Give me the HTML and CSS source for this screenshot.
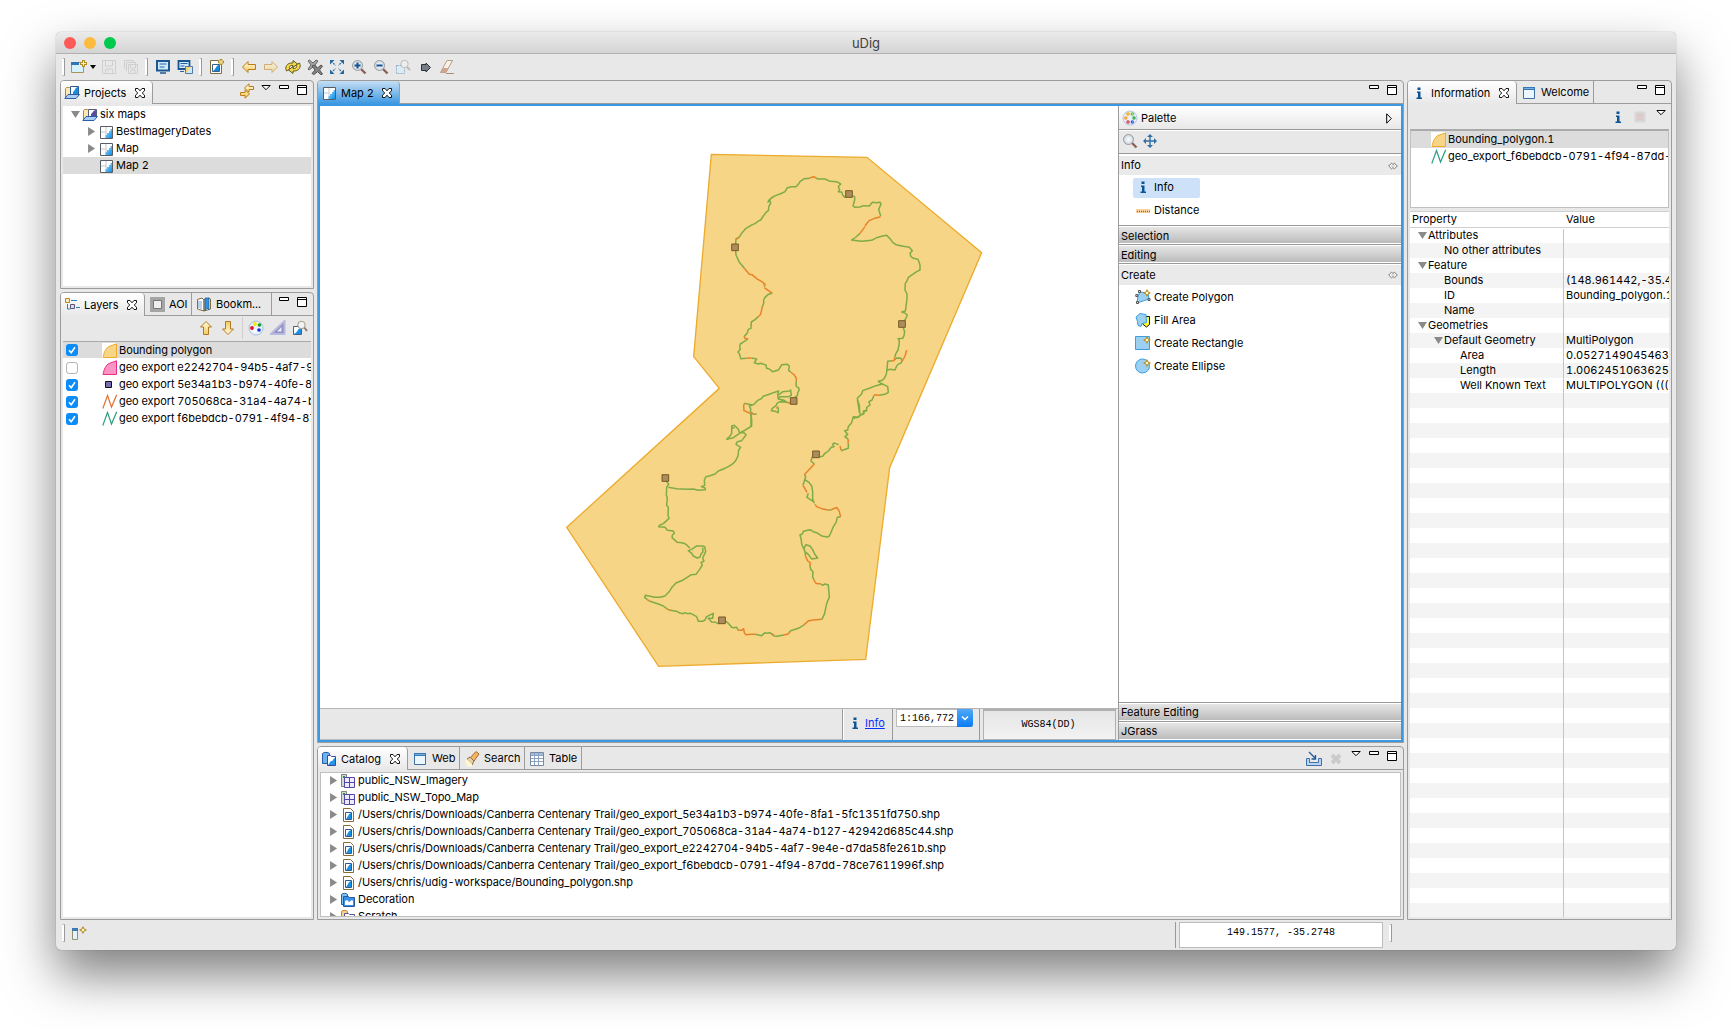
FILE: index.html
```html
<!DOCTYPE html>
<html lang="en">
<head>
<meta charset="utf-8">
<title>uDig</title>
<link rel="stylesheet" href="styles.css">
</head>
<body>
<svg class="defs" width="0" height="0">
  <defs>
    <linearGradient id="sky" x1="0" y1="0" x2="1" y2="1"><stop offset="0" stop-color="#9fdcff"/><stop offset="1" stop-color="#0a8de6"/></linearGradient>
    <linearGradient id="gold" x1="0" y1="0" x2="0" y2="1"><stop offset="0" stop-color="#fffbe0"/><stop offset="1" stop-color="#f5c95e"/></linearGradient>
    <radialGradient id="lens"><stop offset="0" stop-color="#fff"/><stop offset="1" stop-color="#c8d4e2"/></radialGradient>
  </defs>
  <symbol id="i-close" viewBox="0 0 10 10"><path d="M.5 .5H3L5 2.800 7 .5H9.500V2.800L7.200 5 9.500 7.200V9.500H7L5 7.200 3 9.500H.5V7.200L2.800 5 .5 2.800Z" fill="#fff" stroke="#111"/></symbol>
  <symbol id="i-win" viewBox="0 0 28 10"><path d="M.5 .5h9v3h-9zM18.500 .5h9v9h-9zM18 2.500h10" fill="#fff" stroke="#000"/></symbol>
  <symbol id="i-menu" viewBox="0 0 10 6"><path d="M.8 .5H9.200L5 4.700Z" fill="#fff" stroke="#000"/></symbol>
  <symbol id="i-map" viewBox="0 0 16 16"><path d="M2.500 2.500h12v12h-12z" fill="#fff" stroke="#585d66"/><path d="M3 8h5V3M8 8v6" fill="none" stroke="#c3c7ce"/><path d="M14 5h-1.500v2H11v2H9v2H7.500v3H14z" fill="url(#sky)"/></symbol>
  <symbol id="i-project" viewBox="0 0 16 16"><path d="M1.500 13V3.500l1-1h3l1 1V9z" fill="#fde9b0" stroke="#b8873a"/><path d="M6.500 2.500h8v8h-8z" fill="#fff" stroke="#555b7a"/><path d="M14 3c-3 0-3 3-5 4v3h5z" fill="#5a4b9c"/><path d="M.8 13.500L4 9.500h11.500L12 13.500Z" fill="#a9cdf5" stroke="#2a5da8"/></symbol>
  <symbol id="i-project2" viewBox="0 0 16 16"><path d="M1.500 13V3.500l1-1h3l1 1V9z" fill="#fde9b0" stroke="#b8873a"/><path d="M6.500 1.500h8v9h-8z" fill="#fff" stroke="#2c5c94"/><path d="M14 2c-3 0-3 4-5 5v3h5z" fill="#1790df"/><path d="M.8 13.500L4 9.500h11.500L12 13.500Z" fill="#a9cdf5" stroke="#2a5da8"/></symbol>
  <symbol id="i-layers" viewBox="0 0 16 16"><path d="M3.500 7v5h3M7 3.500h6M12 10.500h4" fill="none" stroke="#2a83b5"/><path d="M1.500 1.500h4v4h-4z" fill="#fdeab4" stroke="#b78528"/><path d="M6.500 7.500h4v4h-4z" fill="#ddd8f2" stroke="#5c5579"/></symbol>
  <symbol id="i-aoi" viewBox="0 0 16 16"><path d="M1 0h15v15H1z" fill="#a5a5a5"/><path d="M4.500 3.500h8v8h-8z" fill="#eee" stroke="#777"/></symbol>
  <symbol id="i-book" viewBox="0 0 16 16"><path d="M1.500 2.500L6 1l2 2v11l-6.500-2zM8 3l5-2 1.500 1v10L8 14z" fill="#fff" stroke="#846b3d"/><path d="M3 4v7M5 4v8" stroke="#75a0c9"/><path d="M9 1h4v12l-2-2-2 3z" fill="#2f8fe0" stroke="#1d5d9b" stroke-width=".7"/></symbol>
  <symbol id="i-info" viewBox="0 0 16 16"><path d="M6 6.500h3.500v6H11V14H5.500v-1.500H7V8H6zM6.500 2.500h3V5h-3z" fill="#0b5595"/></symbol>
  <symbol id="i-page" viewBox="0 0 16 16"><path d="M2.500 2.500h11v11h-11z" fill="#eaf7ff" stroke="#3f6f9e"/><path d="M2 2h12v3H2z" fill="#3877b5"/><path d="M3 3.500h10" stroke="#74b1df"/></symbol>
  <symbol id="i-new" viewBox="0 0 16 16"><path d="M.5 3.500h12v10H.5z" fill="#d6f1fb" stroke="#a69459"/><path d="M0 3h8v3H0z" fill="#2f74b4"/><path d="M12.500 1v7M9 4.500h7" stroke="#b38b24" stroke-width="3"/><path d="M12.500 2v5M10 4.500h5" stroke="#fff6bd"/></symbol>
  <symbol id="i-save" viewBox="0 0 16 16"><path d="M1.500 1.500h13v13h-13zM4.500 2v5h7V2M4.500 14v-4h7v4M6.500 12h1.500" fill="none" stroke="#cfcfcf"/></symbol>
  <symbol id="i-saveall" viewBox="0 0 16 16"><path d="M1.500 10V1.500h9V4M3.500 12V3.500h9V6M5.500 5.500h9v9h-9zM7.500 6v3h5V6M8 14v-3h4v3" fill="none" stroke="#cfcfcf"/></symbol>
  <symbol id="i-screen" viewBox="0 0 16 16"><path d="M2 2h12v9.500H2z" fill="#cfeafd" stroke="#1c5691" stroke-width="2"/><path d="M4.500 5h7M4.500 8h5" stroke="#2a649d"/><path d="M5 14h6" stroke="#26578b" stroke-width="1.500"/></symbol>
  <symbol id="i-screen2" viewBox="0 0 16 16"><path d="M1.500 2h11v8h-11z" fill="#cfeafd" stroke="#1c5691" stroke-width="1.800"/><path d="M3.500 4.500h7M3.500 7h4M3 12.500h4" stroke="#2a649d"/><path d="M8.500 7.500h7v7h-7z" fill="#fbd36b" stroke="#557aa5"/><path d="M15 8c-4 1-3 4-6 6h6z" fill="#c7eafc"/></symbol>
  <symbol id="i-newmap" viewBox="0 0 16 16"><path d="M1.500 1.500h8l3 3v10h-11z" fill="#fff" stroke="#7d6a3e"/><path d="M3.500 5.500h7v7h-7z" fill="#fff" stroke="#385e85"/><path d="M10 6c-3 .5-3 4-6 6h6z" fill="#1689df"/><path d="M12 0v6M9 3h6" stroke="#b38b24" stroke-width="2.600"/><path d="M12 1v4M10 3h4" stroke="#fff4b4"/></symbol>
  <symbol id="i-back" viewBox="0 0 16 16"><path d="M1.500 8L7 2.500V5.500h7.500v5H7v3z" fill="url(#gold)" stroke="#bb7d1b"/></symbol>
  <symbol id="i-refresh" viewBox="0 0 16 16"><path d="M1.500 12C-.5 8 2 3.500 8 4V1.500L12.500 5 8 8.500V6.500C5 6 3.500 8 5 10z" fill="#f5d74c" stroke="#645c20"/><path d="M14.500 4c2 4-.5 8.500-6.500 8v2.500L3.500 11 8 7.500v2c3 .5 4.500-1.500 3-3.500z" fill="#f5d74c" stroke="#645c20"/></symbol>
  <symbol id="i-stop" viewBox="0 0 16 16"><path d="M1 2l1.500-1L6 4l3-3 2 1-3 4 3 4-2 1-3-3-4 3-1-1 3-4z" fill="#a5a5a5" stroke="#666"/><path d="M5 7l2-1 3.500 3L14 6l1.500 1-3 4 3 4-1.500.7-3.500-3L7 15.500l-2-1 3-3.500z" fill="#858585" stroke="#555"/></symbol>
  <symbol id="i-extent" viewBox="0 0 16 16"><path d="M2 2l4.500 4.500M14 2L9.500 6.500M2 14l4.500-4.500M14 14L9.500 9.500" stroke="#3273a5" stroke-width="1.300" stroke-dasharray="2 1"/><path d="M1 1h4.500L1 5.500zM15 1v4.500L10.500 1zM1 15v-4.500L5.500 15zM15 15h-4.500l4.500-4.500z" fill="#24689d"/></symbol>
  <symbol id="i-lens" viewBox="0 0 16 16"><path d="M10 10l4.500 4.500" stroke="#896259" stroke-width="2.400"/><circle cx="6.500" cy="6.500" r="5" fill="url(#lens)" stroke="#9b9b9b"/></symbol>
  <symbol id="i-zoomin" viewBox="0 0 16 16"><use href="#i-lens"/><path d="M3.500 6.500h6M6.500 3.500v6" stroke="#11548f" stroke-width="2"/></symbol>
  <symbol id="i-zoomout" viewBox="0 0 16 16"><use href="#i-lens"/><path d="M3.500 6.500h6" stroke="#11548f" stroke-width="2"/></symbol>
  <symbol id="i-zoomsel" viewBox="0 0 16 16"><path d="M1.500 6.500h8v8h-8z" fill="#dcecf5" stroke="#8fb0c4" stroke-dasharray="2 1"/><path d="M12 8l3 3" stroke="#c7b5ae" stroke-width="2"/><circle cx="9.500" cy="5" r="3.700" fill="#eee" stroke="#bbb"/></symbol>
  <symbol id="i-tag" viewBox="0 0 16 16"><path d="M4.500 5.500H9V4l4.500 4.500L9 13v-1.500H4.500z" fill="#777d86" stroke="#30343a"/></symbol>
  <symbol id="i-erase" viewBox="0 0 16 16"><path d="M8 1.500h5.500L7 13.500H1.500z" fill="#faf3ea" stroke="#b69b88"/><path d="M4 9h5.500L7 13.500H1.500z" fill="#cfa58c"/><path d="M7 14.500h8" stroke="#a98c73"/></symbol>
  <symbol id="i-link" viewBox="0 0 16 16"><path d="M5.500 5L10 .8v2.700h4.500v3H10v2.700zM10.500 11L6 6.800v2.700H1.500v3H6v2.700z" fill="url(#gold)" stroke="#bb7d1b"/></symbol>
  <symbol id="i-up" viewBox="0 0 16 16"><path d="M8 1.500L13.500 7H10.500v7.500h-5V7h-3z" fill="url(#gold)" stroke="#b07a20"/></symbol>
  <symbol id="i-palette" viewBox="0 0 16 16"><circle cx="8" cy="8" r="7" fill="#e7f1fd" stroke="#a9bdd6"/><circle cx="7" cy="4" r="1.900" fill="#f3ea00"/><circle cx="11.500" cy="5" r="1.800" fill="#169b1c"/><circle cx="4" cy="8" r="1.900" fill="#ea1020"/><circle cx="11" cy="10" r="1.800" fill="#1430d8"/><circle cx="7" cy="11" r="1.800" fill="#fff"/></symbol>
  <symbol id="i-palette2" viewBox="0 0 16 16"><circle cx="8" cy="8" r="7" fill="#e6effa" stroke="#b4c6dc"/><g fill="#fff" stroke-width="1.200"><circle cx="6" cy="4" r="1.100" stroke="#f0a500"/><circle cx="10.300" cy="4" r="1.100" stroke="#6fbe32"/><circle cx="3.800" cy="8" r="1.100" stroke="#f49d22"/><circle cx="12" cy="8" r="1.100" stroke="#25a63c"/><circle cx="6" cy="12" r="1.100" stroke="#db3340"/><circle cx="10.300" cy="12" r="1.100" stroke="#2a56db"/></g></symbol>
  <symbol id="i-scale" viewBox="0 0 16 16"><path d="M14.500 1v13H1z" fill="#8f8fc4" stroke="#b9b9dd" stroke-width="2"/><path d="M11.500 7v4.500H7z" fill="#eef"/></symbol>
  <symbol id="i-zoomlayer" viewBox="0 0 16 16"><path d="M1.500 6.500h8v8h-8z" fill="#fff" stroke="#4c5f7c"/><path d="M9 8c-3 0-3 4-7 6h7z" fill="#1a90e4"/><path d="M12 7l3 4" stroke="#8c7d74" stroke-width="2"/><circle cx="9.500" cy="5" r="3.700" fill="#eef3f8" stroke="#a8987f"/></symbol>
  <symbol id="i-poly" viewBox="0 0 15 15"><path d="M0 0h15v15H0z" fill="#fff"/><path d="M1 14.500C2 9 4 5 7 3.500L14.500 .8v13.700z" fill="#f6d586" stroke="#efa92b"/></symbol>
  <symbol id="i-polypink" viewBox="0 0 15 15"><path d="M1 14.500C2 9 4 5 7 3.500L14.500 .8v13.700z" fill="#fa94c2" stroke="#ea2c8c"/></symbol>
  <symbol id="i-point" viewBox="0 0 15 15"><path d="M3.500 4.500h6v6h-6z" fill="#7570b3" stroke="#111"/></symbol>
  <symbol id="i-line" viewBox="0 0 15 15"><path d="M.8 14.500L5.500 1.500 9.500 13 14.700 .8" fill="none" stroke="currentColor" stroke-width="1.200"/></symbol>
  <symbol id="i-catalog" viewBox="0 0 16 16"><path d="M1.500 2.500c1-1.500 6-1.500 7 0v10h-7z" fill="#6fb2ef" stroke="#235fa5"/><path d="M6.500 4.500h3l1 1h4v9h-8z" fill="#fff" stroke="#41439c"/><path d="M14 7c-2 0-2 4-4 3l-3 4h7z" fill="#2196ea"/></symbol>
  <symbol id="i-torch" viewBox="0 0 16 16"><path d="M6 7l6-6.500 3 2.500-5 7z" fill="#f5b45e" stroke="#a8692b"/><path d="M3 8l3-2 4 4-2 4z" fill="#e3cfa8" stroke="#8c6b45"/><path d="M1 10l2-2 5 5v2.500H3z" fill="#fff7cf"/></symbol>
  <symbol id="i-table" viewBox="0 0 16 16"><path d="M1.500 1.500h13v13h-13z" fill="#fff" stroke="#7888a0"/><path d="M2 2h12v2.500H2z" fill="#a5bedf"/><path d="M2 4.500h12M2 7.500h12M2 10.500h12M5.500 2v12M9.500 2v12" stroke="#8ca3c5"/></symbol>
  <symbol id="i-import" viewBox="0 0 16 16"><path d="M.5 7.500v7h15v-7h-3v4h-9v-4z" fill="#b9d4ee" stroke="#3f70ac"/><path d="M3 1l6 6M9.500 4v4H5.500" fill="none" stroke="#1e5b96" stroke-width="1.300"/></symbol>
  <symbol id="i-delete" viewBox="0 0 16 16"><path d="M4 4l8 8M12 4l-8 8" stroke="#cbcbcb" stroke-width="4"/></symbol>
  <symbol id="i-wms" viewBox="0 0 16 16"><path d="M1.500 1.500h5v12h-5z" fill="#d3dbd9" stroke="#7a8583"/><path d="M3 3h2v2H3z" fill="#1a9c38"/><path d="M4.500 4.500h10v10h-10zM4.500 9.500h10M9.500 4.500v10" fill="#eeeaff" stroke="#5347a5"/></symbol>
  <symbol id="i-shp" viewBox="0 0 16 16"><path d="M3.500 1.500h7l3 3v10h-10z" fill="#fff" stroke="#8c6b33"/><path d="M5.500 5.500h6v7h-6z" fill="#fff" stroke="#335a89"/><path d="M11 6c-3 1-3 4-5 6h5z" fill="#1a90e4"/></symbol>
  <symbol id="i-deco" viewBox="0 0 16 16"><path d="M1.500 2.500c1-1.500 5-1.500 6 0v10h-6z" fill="#7ec0f2" stroke="#235fa5"/><path d="M3.500 4.500h5l1 1h5v9h-11z" fill="#3a90e4" stroke="#2757a0"/><path d="M5 13V9l2-1 2 2 3-2 1 1v4z" fill="#fff"/></symbol>
  <symbol id="i-scratch" viewBox="0 0 16 16"><path d="M1.500 2.500c1-1.500 5-1.500 6 0v10h-6z" fill="#fbd48c" stroke="#c77f28"/><path d="M4.500 4.500h4l1 1h5v9h-10z" fill="#fff" stroke="#5652a4"/></symbol>
  <symbol id="i-pan" viewBox="0 0 16 16"><path d="M8 3v10M3 8h10" stroke="#326fa4" stroke-width="1.400"/><path d="M8 1l3 3H5zM8 15l3-3H5zM1 8l3-3v6zM15 8l-3-3v6z" fill="#326fa4"/></symbol>
  <symbol id="i-ruler" viewBox="0 0 16 16"><path d="M1 7h14v4H1z" fill="#f9d3a0"/><path d="M2 9.500h13" stroke="#a36a2d" stroke-width="1.500" stroke-dasharray="1 1"/></symbol>
  <symbol id="i-star" viewBox="0 0 8 8"><path d="M4 .7L5 3l2.300 1L5 5 4 7.300 3 5 .7 4 3 3z" fill="#fff6bd" stroke="#b38b24"/></symbol>
  <symbol id="i-cpoly" viewBox="0 0 16 16"><path d="M5 3l8 1 1 6-12 4 1-7z" fill="#9ccff0" stroke="#3d9fdf"/><path d="M3.500 1.500h2v2h-2zM.8 5.500h2v2h-2zM1.500 12.500h2v2h-2zM13 9.500h2v2h-2z" fill="#ddd" stroke="#555"/><use href="#i-star" x="8" y="0" width="8" height="8"/></symbol>
  <symbol id="i-fill" viewBox="0 0 16 16"><path d="M10 4.500h4.500v8l-3 2.500-4-3z" fill="#ffff25" stroke="#111"/><path d="M1 5l4-3.500 6 1 .5 8-4.500 1-1 3-3-1-.5-4z" fill="#9ccff0" stroke="#3d9fdf"/></symbol>
  <symbol id="i-rect" viewBox="0 0 16 16"><path d="M.5 1.500h14v13H.5z" fill="#9ccff0" stroke="#3d9fdf"/><use href="#i-star" x="8" y="1" width="8" height="8"/></symbol>
  <symbol id="i-ell" viewBox="0 0 16 16"><circle cx="7.500" cy="8" r="7" fill="#9ccff0" stroke="#3d9fdf"/><use href="#i-star" x="8" y="1" width="8" height="8"/></symbol>
  <symbol id="i-pin" viewBox="0 0 10 8"><path d="M.7 4L3.500 1.200 5 2.500 6.500 1.200 9.300 4 6.500 6.800 5 5.500 3.500 6.800zM3.500 4h1M5.500 4h1" fill="#fff" stroke="#666" stroke-width=".9"/></symbol>
  <symbol id="i-fast" viewBox="0 0 16 16"><path d="M1.500 3.500h5v11h-5z" fill="#e0f5ff" stroke="#96906c"/><path d="M1 3h6v3H1z" fill="#3a7bb6"/><use href="#i-star" x="8" y="1" width="8" height="8"/></symbol>
  <symbol id="i-stopbox" viewBox="0 0 16 16"><path d="M3.500 3.500h9v9h-9z" fill="#ddcaca" stroke="#d8d8d8" stroke-width="2"/></symbol>
</svg>

<main class="window">
  <header class="titlebar"><i class="light red"></i><i class="light amber"></i><i class="light green"></i><h1>uDig</h1></header>

  <nav class="toolbar">
    <i class="grip"></i>
    <span class="tool"><svg><use href="#i-new"/></svg></span><i class="drop"></i>
    <span class="tool"><svg><use href="#i-save"/></svg></span><span class="tool"><svg><use href="#i-saveall"/></svg></span>
    <i class="grip"></i>
    <span class="tool"><svg><use href="#i-screen"/></svg></span><span class="tool"><svg><use href="#i-screen2"/></svg></span>
    <i class="grip"></i>
    <span class="tool"><svg><use href="#i-newmap"/></svg></span>
    <i class="grip"></i>
    <span class="tool"><svg><use href="#i-back"/></svg></span>
    <span class="tool faded"><svg class="flip"><use href="#i-back"/></svg></span>
    <span class="tool"><svg><use href="#i-refresh"/></svg></span>
    <span class="tool"><svg><use href="#i-stop"/></svg></span>
    <span class="tool"><svg><use href="#i-extent"/></svg></span>
    <span class="tool"><svg><use href="#i-zoomin"/></svg></span>
    <span class="tool"><svg><use href="#i-zoomout"/></svg></span>
    <span class="tool"><svg><use href="#i-zoomsel"/></svg></span>
    <span class="tool"><svg><use href="#i-tag"/></svg></span>
    <span class="tool"><svg><use href="#i-erase"/></svg></span>
  </nav>

  <div class="workbench">
    <div class="col left">
      <section class="panel projects">
        <div class="tabs">
          <div class="tab on t-projects"><svg><use href="#i-project2"/></svg>Projects<svg class="x"><use href="#i-close"/></svg></div>
          <div class="actions"><svg class="link"><use href="#i-link"/></svg><svg class="menu"><use href="#i-menu"/></svg><svg class="win"><use href="#i-win"/></svg></div>
        </div>
        <ul class="tree">
          <li class="row"><i class="open"></i><svg><use href="#i-project"/></svg>six maps</li>
          <li class="row sub"><i class="shut"></i><svg><use href="#i-map"/></svg>BestImageryDates</li>
          <li class="row sub"><i class="shut"></i><svg><use href="#i-map"/></svg>Map</li>
          <li class="row sub sel"><i class="leaf"></i><svg><use href="#i-map"/></svg>Map 2</li>
        </ul>
      </section>
      <section class="panel layers">
        <div class="tabs">
          <div class="tab on t-layers"><svg><use href="#i-layers"/></svg>Layers<svg class="x"><use href="#i-close"/></svg></div>
          <div class="tab t-aoi"><svg><use href="#i-aoi"/></svg>AOI</div>
          <div class="tab t-book"><svg><use href="#i-book"/></svg>Bookm...</div>
          <div class="actions"><svg class="win"><use href="#i-win"/></svg></div>
        </div>
        <div class="layerbar"><svg><use href="#i-up"/></svg><svg class="down"><use href="#i-up"/></svg><i></i><svg><use href="#i-palette"/></svg><svg><use href="#i-scale"/></svg><svg><use href="#i-zoomlayer"/></svg></div>
        <ul class="layerlist">
          <li class="sel"><span class="check"><svg viewBox="0 0 12 12"><path d="M3 6.300l2.200 2.400L9 3.300"/></svg></span><svg class="sym"><use href="#i-poly"/></svg>Bounding polygon</li>
          <li><span class="check off"></span><svg class="sym"><use href="#i-polypink"/></svg>geo export e2242704-94b5-4af7-9e4e</li>
          <li><span class="check"><svg viewBox="0 0 12 12"><path d="M3 6.300l2.200 2.400L9 3.300"/></svg></span><svg class="sym"><use href="#i-point"/></svg>geo export 5e34a1b3-b974-40fe-8fa1</li>
          <li><span class="check"><svg viewBox="0 0 12 12"><path d="M3 6.300l2.200 2.400L9 3.300"/></svg></span><svg class="sym orange"><use href="#i-line"/></svg>geo export 705068ca-31a4-4a74-b127</li>
          <li><span class="check"><svg viewBox="0 0 12 12"><path d="M3 6.300l2.200 2.400L9 3.300"/></svg></span><svg class="sym teal"><use href="#i-line"/></svg>geo export f6bebdcb-0791-4f94-87dd</li>
        </ul>
      </section>
    </div>

    <div class="col center">
      <section class="panel editor">
        <div class="tabs">
          <div class="tab on t-map"><svg><use href="#i-map"/></svg>Map 2<svg class="x"><use href="#i-close"/></svg></div>
          <div class="actions"><svg class="win"><use href="#i-win"/></svg></div>
        </div>
        <div class="editbody">
          <div class="mapside">
            <svg class="canvas" viewBox="0 0 798 602">
              <g transform="translate(230 34) scale(.33333)">
                <path class="bounds" d="M484 43L951 52 1295 338 1019 983 947 1558 326 1579 50 1162 508 745 431 650Z"/>
                <g class="trail">
                  <path d="M780 115L763 116 750 125 745 133 738 140 725 140 712 143 705 155 690 162 676 167 664 174 657 180 653 188M664 174L659 180 662 190 657 198 655 212 648 217 640 228 632 240 625 243 615 251 607 254 588 265 575 280 567 292 558 297 556 322 558 345 567 365 583 385M645 430L643 440M667 460L655 463 645 472 641 480 641 490 637 500M625 530L615 539 604 546 603 565 595 568 592 578 582 590M594 597L582 605 571 612 569 620 571 628 564 636 569 643 572 656 590 655M604 654L620 657 613 668 625 672 632 670 648 675 650 685 658 687 668 695 685 690 692 680 695 674 712 673 718 678 716 692 722 696M739 722L738 738 747 745 747 752 743 758 743 766 737 770 731 784M714 789L702 781 685 777 683 764 686 753 670 758 660 762 640 769 634 776 622 782 612 793 607 795 583 790M686 765L698 755 718 753 722 750 724 766 716 770 690 770 684 776 698 782 712 787 690 785 681 790 678 797 666 806 664 812 676 814 685 818 685 808 683 800M607 795L598 798 602 806 601 814 610 823 620 822M603 822L603 860"/>
                  <path d="M797 114L805 117 825 117 840 124 860 125 872 132 865 140 869 150 865 155 875 156 878 165 884 172 897 163 914 170 914 180 909 198 915 202 930 201 940 197 958 198 967 187 980 188 990 187 993 192 986 208 992 228M930 280L918 291 905 300 935 304 965 301 980 293 995 289 1010 286 1020 296 1028 307 1038 314 1060 319 1078 322 1087 332 1080 340 1083 350 1090 355 1104 358 1110 375 1110 390 1100 395 1087 404 1075 412 1071 423 1066 430 1065 450 1071 462 1071 475 1068 500 1066 513 1055 516 1065 519 1072 525 1065 540 1056 552 1064 575 1062 587 1058 595 1044 596 1047 600 1048 610 1044 630 1038 640 1034 652M1026 662L1013 664 1011 690 1022 688 1035 690 1039 680 1044 673 1053 669 1056 663 1053 655 1040 654 1034 659M1011 690L1009 702 1003 715 997 721 985 724 991 729 1000 733 1013 740 1015 757 1005 763 987 766M972 766L966 780 957 785 960 795 950 802 950 812 940 813 941 822 932 825 925 832 910 835M997 732L978 737 960 744 938 752 935 762 922 775 925 795 929 820"/>
                </g>
                <path class="road" d="M780 113L792 110 797 114M558 297L565 294M583 385L598 403 606 404 620 416 640 428 645 438M643 443L667 460M637 500L632 523 625 530M582 590L585 595 594 597M590 655L604 654M722 696L733 705 739 715 739 722M583 790L581 798 582 812 605 822 608 818M683 800L680 806M714 789L728 788M992 230L974 235 957 242 945 258M945 260L930 280M1034 652L1032 662 1026 662M1070 631L1065 648 1057 663M987 766L972 764"/>
                <g class="stage"><path d="M545 312h20v20h-20zM887 152h20v20h-20zM1046 542h20v20h-20zM721 773h20v20h-20z"/></g>
              </g>
              <g transform="translate(230 294) scale(.33333)">
                <g class="trail">
                  <path d="M950 30L944 33 940 42 932 43 925 52 910 50 905 68 895 80 893 90 884 92 893 103 885 110 895 118M922 0L928 15 929 40M895 130L895 145 873 152M866 134L852 129 848 133 852 140 844 142 835 153 825 160 818 169 810 170 798 163M791 168L786 172 783 183 793 192M763 224L767 230 764 240 759 256M766 240L777 247 785 258 788 275 788 297 793 310M791 305L780 298 771 292 775 280M835 330L842 330M872 350L862 352 858 368 850 380 845 392 838 408 832 411 815 408 800 398 790 395 780 389 760 394 757 402 750 405 754 420 755 432 765 455 767 470M764 452L762 445 768 434 780 438 788 449 794 462 803 474 785 477 775 463 765 455M780 497L782 507 789 516 788 530 792 540M812 551L817 556 825 552 835 555 838 592 832 605 828 620 824 640 816 658M760 676L745 685 722 692 718 697M702 705L680 709 672 708 660 698 650 700 645 698 635 707 616 703M565 691L560 682 550 683 545 682 537 672 530 665 515 661 505 671 497 667 485 666 475 655 488 655 490 640 470 650 465 660 458 664 445 664 440 650 422 640 412 641 405 638 400 641 390 639 380 634 370 632 357 630M350 626L340 618 325 612 300 604M292 599L284 592 286 586 315 592 330 592 345 588 356 577 366 562 378 549 400 540 424 524 438 523 449 508 457 495 453 488 462 483 458 474 467 455 464 440 458 438 440 438 425 448 415 452 425 460 430 468 442 474 450 471 453 462 459 455 458 443M420 445L408 433 400 429 382 427 366 413 367 406 373 400 370 393 352 391 345 382 326 380 330 375 340 371 357 355 354 346 355 322 350 316 352 294 349 285 350 262 356 252 350 245 346 235M355 262L380 266 410 268 430 267 445 271 466 269 465 264 454 260 464 256 463 240 468 230 480 227 495 222 505 213 520 207 535 200 550 190 557 182 564 168 566 150 572 142 558 133 562 125 575 122 588 105 583 99 568 97 565 88 553 76 545 78 547 85 554 82M578 95L605 78 605 60 603 40M545 82L545 100 540 108 530 118 550 113 572 98 580 93"/>
                </g>
                <path class="road" d="M895 118L894 130M873 150L870 138M793 192L763 224M759 256L771 277M795 313L800 320 815 326 835 330M842 330L860 322 867 332 872 350M767 470L774 484 780 487 780 499M792 540L797 549 803 551 812 551M816 658L790 660 776 662 760 676M720 695L714 702 702 705M672 706L666 701M616 703L605 703 588 704 583 698 581 686 575 691 565 691M357 630L350 626M300 604L292 599"/>
                <g class="stage"><path d="M788 153h20v20h-20zM336 224h20v20h-20zM506 651h20v20h-20z"/></g>
              </g>
            </svg>
            <footer class="mapstatus">
              <div class="fill"></div>
              <div class="mode"><svg><use href="#i-info"/></svg><a>Info</a></div>
              <div class="scale"><span class="combo"><b>1:166,772</b><i><svg viewBox="0 0 16 18"><path d="M5 7.500l3 3 3-3"/></svg></i></span></div>
              <div class="crs">WGS84(DD)</div>
            </footer>
          </div>
          <aside class="palette">
            <div class="pal-title"><svg><use href="#i-palette2"/></svg>Palette<svg class="tri" viewBox="0 0 6 11"><path d="M.7 .8L5.300 5.500.7 10.200Z"/></svg></div>
            <div class="pal-tools"><svg><use href="#i-lens"/></svg><svg><use href="#i-pan"/></svg></div>
            <div class="group g-info">Info<svg><use href="#i-pin"/></svg></div>
            <div class="entries e-info">
              <div class="entry picked"><svg><use href="#i-info"/></svg>Info</div>
              <div class="entry"><svg><use href="#i-ruler"/></svg>Distance</div>
            </div>
            <div class="drawer">Selection</div>
            <div class="drawer">Editing</div>
            <div class="group g-create">Create<svg><use href="#i-pin"/></svg></div>
            <div class="entries e-create">
              <div class="entry"><svg><use href="#i-cpoly"/></svg>Create Polygon</div>
              <div class="entry"><svg><use href="#i-fill"/></svg>Fill Area</div>
              <div class="entry"><svg><use href="#i-rect"/></svg>Create Rectangle</div>
              <div class="entry"><svg><use href="#i-ell"/></svg>Create Ellipse</div>
            </div>
            <div class="drawer">Feature Editing</div>
            <div class="drawer">JGrass</div>
          </aside>
        </div>
      </section>
      <section class="panel catalog">
        <div class="tabs">
          <div class="tab on t-cat"><svg><use href="#i-catalog"/></svg>Catalog<svg class="x"><use href="#i-close"/></svg></div>
          <div class="tab t-web"><svg><use href="#i-page"/></svg>Web</div>
          <div class="tab t-search"><svg><use href="#i-torch"/></svg>Search</div>
          <div class="tab t-table"><svg><use href="#i-table"/></svg>Table</div>
          <div class="actions"><svg class="ico"><use href="#i-import"/></svg><svg class="ico del"><use href="#i-delete"/></svg><svg class="menu"><use href="#i-menu"/></svg><svg class="win"><use href="#i-win"/></svg></div>
        </div>
        <ul class="tree boxed">
          <li class="row"><i class="shut"></i><svg><use href="#i-wms"/></svg>public_NSW_Imagery</li>
          <li class="row"><i class="shut"></i><svg><use href="#i-wms"/></svg>public_NSW_Topo_Map</li>
          <li class="row"><i class="shut"></i><svg><use href="#i-shp"/></svg>/Users/chris/Downloads/Canberra Centenary Trail/geo_export_5e34a1b3-b974-40fe-8fa1-5fc1351fd750.shp</li>
          <li class="row"><i class="shut"></i><svg><use href="#i-shp"/></svg>/Users/chris/Downloads/Canberra Centenary Trail/geo_export_705068ca-31a4-4a74-b127-42942d685c44.shp</li>
          <li class="row"><i class="shut"></i><svg><use href="#i-shp"/></svg>/Users/chris/Downloads/Canberra Centenary Trail/geo_export_e2242704-94b5-4af7-9e4e-d7da58fe261b.shp</li>
          <li class="row"><i class="shut"></i><svg><use href="#i-shp"/></svg>/Users/chris/Downloads/Canberra Centenary Trail/geo_export_f6bebdcb-0791-4f94-87dd-78ce7611996f.shp</li>
          <li class="row"><i class="shut"></i><svg><use href="#i-shp"/></svg>/Users/chris/udig-workspace/Bounding_polygon.shp</li>
          <li class="row"><i class="shut"></i><svg><use href="#i-deco"/></svg>Decoration</li>
          <li class="row"><i class="shut"></i><svg><use href="#i-scratch"/></svg>Scratch</li>
        </ul>
      </section>
    </div>

    <section class="panel info">
      <div class="tabs">
        <div class="tab on t-info"><svg><use href="#i-info"/></svg>Information<svg class="x"><use href="#i-close"/></svg></div>
        <div class="tab t-wel"><svg><use href="#i-page"/></svg>Welcome</div>
        <div class="actions"><svg class="win"><use href="#i-win"/></svg></div>
      </div>
      <div class="infobar"><svg><use href="#i-info"/></svg><svg><use href="#i-stopbox"/></svg><svg class="menu"><use href="#i-menu"/></svg></div>
      <ul class="hits">
        <li class="sel"><svg class="sym"><use href="#i-poly"/></svg>Bounding_polygon.1</li>
        <li><svg class="sym teal"><use href="#i-line"/></svg>geo_export_f6bebdcb-0791-4f94-87dd-78ce</li>
      </ul>
      <div class="props">
        <div class="phead"><span>Property</span><span>Value</span></div>
        <div class="prow"><span class="l0"><i class="open"></i>Attributes</span><span></span></div>
        <div class="prow"><span class="l1">No other attributes</span><span></span></div>
        <div class="prow"><span class="l0"><i class="open"></i>Feature</span><span></span></div>
        <div class="prow"><span class="l1">Bounds</span><span>(148.961442,-35.4</span></div>
        <div class="prow"><span class="l1">ID</span><span>Bounding_polygon.1</span></div>
        <div class="prow"><span class="l1">Name</span><span></span></div>
        <div class="prow"><span class="l0"><i class="open"></i>Geometries</span><span></span></div>
        <div class="prow"><span class="l1 node"><i class="open"></i>Default Geometry</span><span>MultiPolygon</span></div>
        <div class="prow"><span class="l2">Area</span><span>0.0527149045463</span></div>
        <div class="prow"><span class="l2">Length</span><span>1.0062451063625</span></div>
        <div class="prow"><span class="l2">Well Known Text</span><span>MULTIPOLYGON (((148</span></div>
      </div>
    </section>
  </div>

  <footer class="statusbar">
    <i class="grip"></i><svg class="fast"><use href="#i-fast"/></svg>
    <span class="space"></span>
    <div class="coords"><span>149.1577, -35.2748</span></div>
    <i class="grip"></i>
  </footer>
</main>
</body>
</html>
```
FILE: styles.css
```css
* { box-sizing: border-box; }
body { margin: 0; width: 1732px; height: 1030px; padding: 32px 56px 0; overflow: hidden; background: #fff; font: 11px/17px Inter, sans-serif; font-variant-numeric: tabular-nums; color: #000; }
.defs { position: absolute; }
svg { flex: none; display: block; width: 16px; height: 16px; }
ul { list-style: none; margin: 0; padding: 0; }

.window { display: flex; flex-direction: column; width: 1620px; height: 918px; border-radius: 5px; background: #e8e8e8; box-shadow: 0 0 1px rgba(0,0,0,.5), 0 25px 50px rgba(0,0,0,.5); }
.titlebar { display: flex; align-items: center; height: 22px; flex: none; padding-left: 8px; border-radius: 5px 5px 0 0; border-bottom: 1px solid #b1b1b1; background: linear-gradient(#ebebeb, #d4d4d4); }
.titlebar h1 { flex: 1; margin: 2px 68px 0 0; text-align: center; font-size: 13px; font-weight: 400; color: #404040; }
.light { width: 12px; height: 12px; margin-right: 8px; border-radius: 50%; }
.red { background: #fc5b57; }
.amber { background: #fdbc40; }
.green { background: #00ca4e; }

.toolbar { display: flex; align-items: center; height: 26px; flex: none; padding-left: 6px; }
.grip { flex: none; width: 3px; height: 18px; margin: 0 3px 0 4px; border: 1px solid #bbb; border-right: 1px solid #999; border-left: 1px solid #fff; background: #fff; }
.toolbar .grip { margin-left: 3px; margin-right: 4px; }
.toolbar .grip:first-child { margin: 0 3px 0 0; }
.tool { display: flex; justify-content: center; width: 22px; }
.tool:nth-of-type(2) { margin-left: -1px; }
.faded { opacity: .55; }
.flip { transform: scaleX(-1); }
.down { transform: scaleY(-1); }
.drop { border: 3px solid transparent; border-top: 4px solid #000; border-bottom: 0; margin-right: 3px; }

.workbench { display: flex; gap: 3px; height: 840px; flex: none; padding: 0 4px; }
.col { display: flex; flex-direction: column; }
.left { width: 254px; gap: 3px; }
.center { width: 1087px; gap: 3px; }
.panel { display: flex; flex-direction: column; border: 1px solid #9c9c9c; border-radius: 4px 4px 0 0; background: #e8e8e8; overflow: hidden; }
.projects { height: 209px; }
.layers { flex: 1; }
.editor { height: 663px; }
.catalog { flex: 1; }
.info { width: 265px; }

.tabs { display: flex; height: 23px; flex: none; box-shadow: inset 0 -1px #9c9c9c; }
.tab { display: flex; align-items: center; gap: 4px; height: 22px; padding: 1px 0 0 4px; border-right: 1px solid #9c9c9c; white-space: nowrap; }
.tab.on { height: 23px; padding-left: 3px; padding-right: 7px; border-radius: 0 4px 0 0; background: linear-gradient(#fff, #e8e8e8); }
.x { width: 10px; height: 10px; margin-left: auto; }
.t-projects { width: 92px; }
.t-layers { width: 84px; }
.t-aoi { width: 47px; }
.t-book { width: 80px; }
.t-map { width: 82px; }
.tab.t-map { background: linear-gradient(#c5def4, #3b98e1); }
.t-cat { width: 90px; }
.t-web { width: 52px; }
.t-search { width: 65px; }
.t-table { width: 57px; }
.t-info { width: 109px; }
.t-wel { width: 77px; }
.actions { display: flex; margin-left: auto; padding: 4px 6px 0 0; }
.win { width: 28px; height: 10px; }
.menu { width: 10px; height: 6px; margin-right: 8px; }
.link { margin: -2px 6px 0 0; }
.ico { margin-right: 6px; }
.del { margin-right: 7px; }

.tree { flex: 1; margin: 2px; overflow: hidden; background: #fff; }
.row { display: flex; align-items: center; height: 17px; white-space: nowrap; padding-left: 8px; }
.row svg { margin: 0 2px 0 2px; }
.row.sub { padding-left: 24px; }
.sel { background: #dcdcdc; }
.open, .shut, .leaf { flex: none; width: 9px; height: 9px; }
.open { background: #8a8a8a; clip-path: polygon(0 10%, 100% 10%, 50% 90%); }
.shut { background: #8a8a8a; clip-path: polygon(12% 0, 90% 50%, 12% 100%); }
.boxed { border: 1px solid #c0c0c0; letter-spacing: -.055px; }
.boxed .row { position: relative; top: -1px; }

.layerbar { display: flex; align-items: center; justify-content: flex-end; gap: 6px; height: 26px; flex: none; margin: 0 2px; padding: 0 3px 1px 0; border-bottom: 1px solid #a9a9a9; }
.layerbar i { width: 1px; height: 22px; margin: 0 -1px 0 0; background: #d0d0d0; }
.layerlist { flex: 1; margin: 0 2px 2px; background: #fff; overflow: hidden; letter-spacing: -.07px; }
.layerlist li { display: flex; align-items: center; height: 17px; padding-left: 3px; white-space: nowrap; }
.layerlist li.sel { height: 16px; }
.layerlist li.sel + li { margin-top: 1px; }
.check { display: block; flex: none; width: 12px; height: 12px; margin-right: 24px; border-radius: 3px; background: #0b8cf8; }
.check svg { width: 12px; height: 12px; fill: none; stroke: #fff; stroke-width: 1.600; }
.check.off { border: 1px solid #b5b5b5; background: #fff; }
.sym { width: 15px; height: 15px; margin-right: 2px; }
.orange { color: #e3712f; }
.teal { color: #2ba080; }

.editbody { display: flex; flex: 1; border: 2px solid #3b98e1; background: #fff; }
.mapside { display: flex; flex-direction: column; width: 798px; }
.canvas { width: 798px; height: 602px; }
.bounds { fill: #f6d586; stroke: #ecab2c; stroke-width: 4; }
.trail path { fill: none; stroke: #7fab49; stroke-width: 4.500; stroke-linejoin: round; }
.road { fill: none; stroke: #e9832a; stroke-width: 4.500; stroke-linejoin: round; }
.stage path { fill: #ab8c5c; stroke: #775a22; stroke-width: 3; }
.mapstatus { display: flex; flex: 1; border-top: 1px solid #b5b5b5; background: #e8e8e8; }
.fill { width: 523px; border-right: 1px solid #999; border-bottom: 1px solid #bbb; }
.mode { display: flex; align-items: center; gap: 2px; width: 50px; padding: 0 0 3px 3px; border-right: 1px solid #999; border-left: 1px solid #fff; }
.mode a { color: #0432ff; text-decoration: underline; }
.scale { width: 87px; padding-left: 3px; border-right: 1px solid #999; }
.combo { display: flex; width: 77px; height: 18px; border: 1px solid #bbb; background: #fff; font: 10px/18px "Liberation Mono", monospace; }
.combo b { font-weight: 400; width: 60px; padding-left: 3px; }
.combo i { width: 16px; margin: -1px -1px -1px 0; height: 18px; border-radius: 0 3px 3px 0; background: linear-gradient(#4fa9f8, #0a7bf4); }
.combo svg { width: 16px; height: 18px; fill: none; stroke: #fff; stroke-width: 1.500; }
.crs { width: 133px; margin-left: 3px; padding-right: 2px; border: 1px solid #b0b0b0; border-width: 2px 1px 1px 1px; text-align: center; font: 10px/27px "Liberation Mono", monospace; background: linear-gradient(#e6e6e6, #f2f2f2); }

.palette { display: flex; flex-direction: column; flex: 1; border-left: 1px solid #9c9c9c; background: #fff; white-space: nowrap; }
.pal-title { display: flex; align-items: center; gap: 3px; height: 24px; flex: none; padding: 1px 9px 0 3px; border-bottom: 1px solid #999; background: linear-gradient(#fff, #e8e8e8); }
.tri { width: 6px; height: 11px; margin-left: auto; fill: #fff; stroke: #000; }
.pal-tools { display: flex; align-items: center; gap: 4px; height: 24px; flex: none; padding: 0 0 2px 3px; border-top: 1px solid #fff; border-bottom: 1px solid #999; background: #e8e8e8; }
.group { display: flex; align-items: center; justify-content: space-between; height: 19px; flex: none; padding: 0 3px 0 2px; background: #eaeaea; }
.group svg { width: 10px; height: 8px; }
.g-info { margin-top: 2px; }
.g-create { margin-top: 1px; height: 20px; }
.entries { padding-left: 14px; }
.entry { display: flex; align-items: center; gap: 3px; height: 20px; margin-bottom: 3px; padding: 0 0 2px 2px; width: 150px; }
.picked { width: 67px; background: #cde2f9; border-radius: 2px; }
.e-info { height: 50px; padding-top: 3px; }
.e-create { flex: 1; padding-top: 3px; }
.drawer { height: 19px; flex: none; padding-left: 2px; border-top: 1px solid #999; box-shadow: inset 0 1px #fff, inset 0 -1px #fff; background: linear-gradient(#e8e8e8, #b9b9b9); line-height: 19px; }
.e-info + .drawer, .e-info + .drawer + .drawer { line-height: 21px; }
.e-info + .drawer + .drawer { height: 20px; border-bottom: 1px solid #999; }

.infobar { display: flex; align-items: center; justify-content: flex-end; height: 25px; flex: none; gap: 6px; }
.infobar .menu { margin: -8px 5px 0 2px; }
.hits { height: 79px; flex: none; margin: 0 2px; border: 1px solid #c0c0c0; border-top: 2px solid #aaa; background: #fff; overflow: hidden; letter-spacing: -.03px; }
.hits li { display: flex; align-items: center; height: 17px; padding-left: 20px; white-space: nowrap; overflow: hidden; }
.props { flex: 1; margin: 3px 2px 2px; border-top: 1px solid #d0d0d0; overflow: hidden; background: linear-gradient(90deg, transparent 153px, #c4c4c4 153px, #c4c4c4 154px, transparent 154px) 0 17px no-repeat, repeating-linear-gradient(#fff 0 15px, #f4f4f4 15px 30px) 0 16px; }
.phead, .prow { display: grid; grid-template-columns: 154px 1fr; height: 15px; line-height: 15px; white-space: nowrap; }
.phead { height: 16px; border-bottom: 1px solid #d0d0d0; background: #fff; }
.phead span { padding-left: 2px; }
.prow span { padding-left: 2px; overflow: hidden; }
.prow span:first-child { display: flex; align-items: center; gap: 1px; }
.prow .l0 { padding-left: 8px; }
.prow .l1 { padding-left: 34px; }
.prow .node { padding-left: 24px; }
.prow .l2 { padding-left: 50px; }

.statusbar { display: flex; flex: 1; padding: 2px 0 2px 2px; }
.statusbar .grip { margin-top: 2px; }
.fast { margin: 3px 0 0 3px; }
.space { flex: 1; }
.coords { width: 208px; padding-left: 3px; border-left: 1px solid #999; }
.coords span { display: block; height: 26px; border: 1px solid #bbb; background: #fff; text-align: center; font: 10px/13px "Liberation Mono", monospace; padding-top: 3px; }
.coords + .grip { margin: 2px 284px 0 6px; }
```
